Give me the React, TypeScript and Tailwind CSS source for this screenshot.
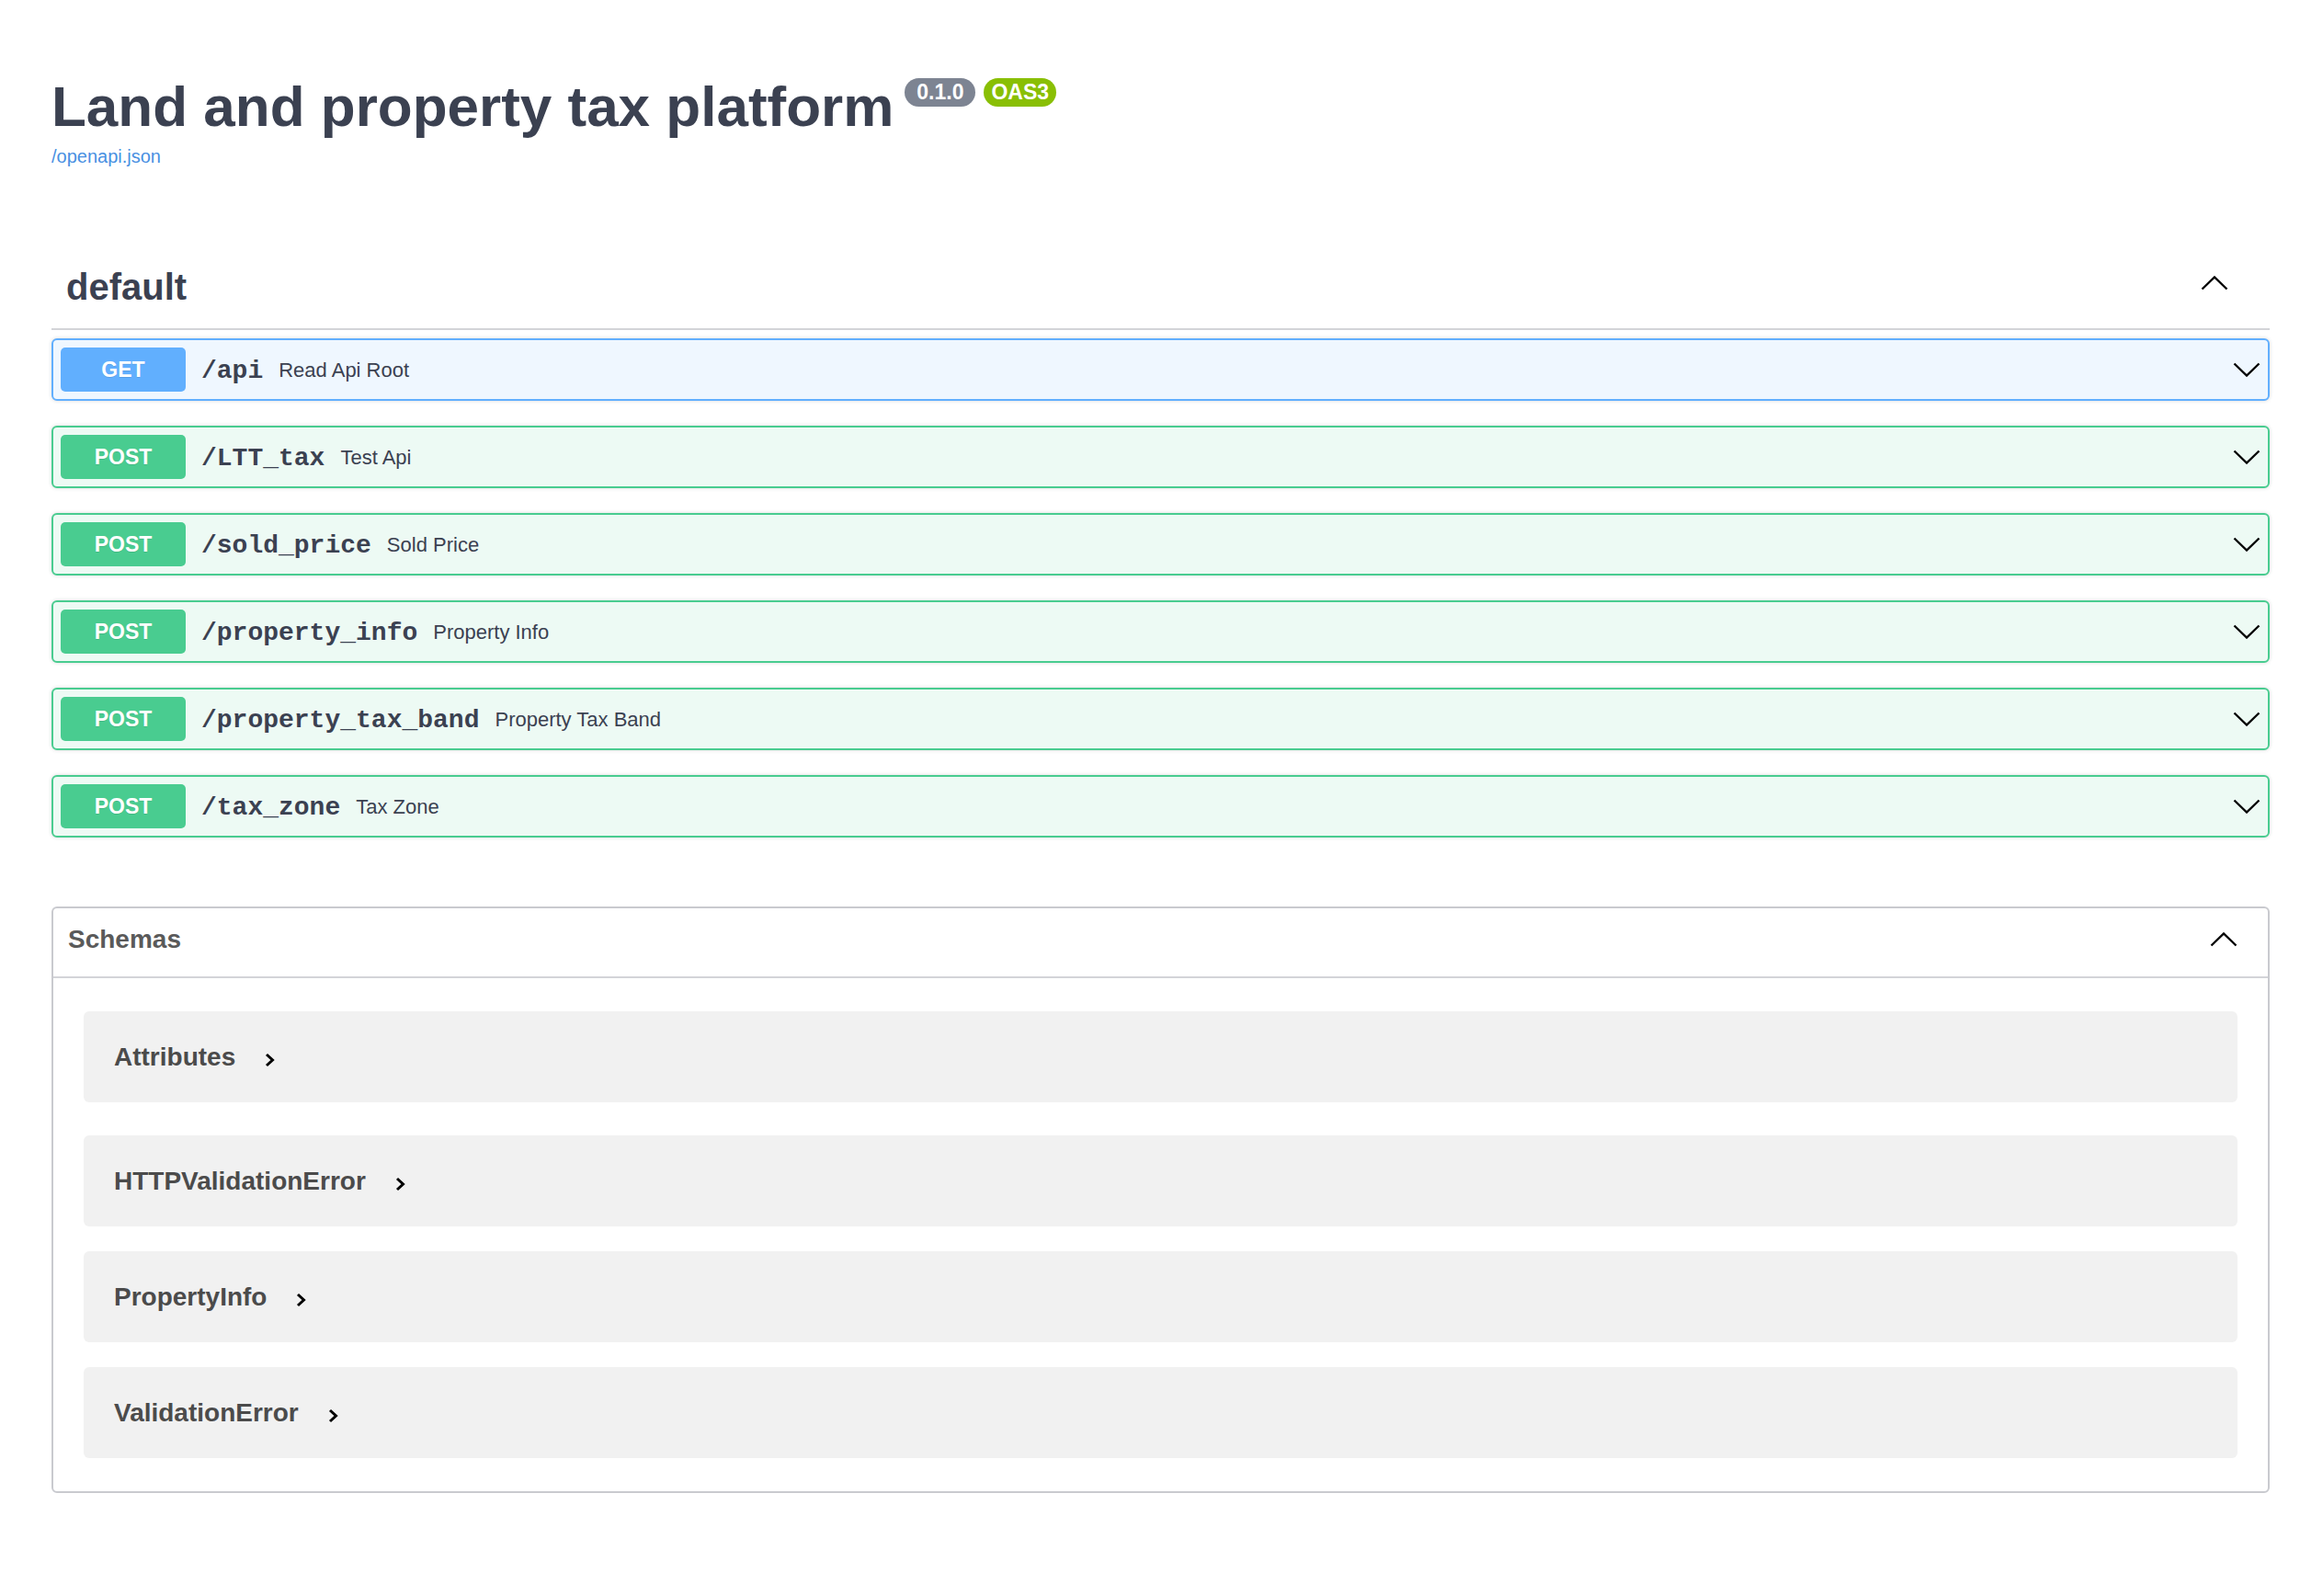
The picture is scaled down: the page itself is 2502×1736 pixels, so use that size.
import React from "react";

type Method = "GET" | "POST";

interface Endpoint {
  method: Method;
  path: string;
  summary: string;
}

const endpoints: Endpoint[] = [
  { method: "GET", path: "/api", summary: "Read Api Root" },
  { method: "POST", path: "/LTT_tax", summary: "Test Api" },
  { method: "POST", path: "/sold_price", summary: "Sold Price" },
  { method: "POST", path: "/property_info", summary: "Property Info" },
  { method: "POST", path: "/property_tax_band", summary: "Property Tax Band" },
  { method: "POST", path: "/tax_zone", summary: "Tax Zone" },
];

const schemas = ["Attributes", "HTTPValidationError", "PropertyInfo", "ValidationError"];

const ChevronDown = () => (
  <svg width="30" height="16" viewBox="0 0 30 16" fill="none" stroke="#000" strokeWidth="2.4">
    <polyline points="1.5,1.5 15,14.5 28.5,1.5" />
  </svg>
);

const ChevronUp = () => (
  <svg width="30" height="16" viewBox="0 0 30 16" fill="none" stroke="#000" strokeWidth="2.4">
    <polyline points="1.5,14.5 15,1.5 28.5,14.5" />
  </svg>
);

const ChevronRight = () => (
  <svg width="11" height="16" viewBox="0 0 11 16" fill="none" stroke="#000" strokeWidth="3">
    <polyline points="2,2 8.5,8 2,14" />
  </svg>
);

const OpBlock = ({ endpoint }: { endpoint: Endpoint }) => {
  const isGet = endpoint.method === "GET";

  return (
    <div
      className={
        isGet
          ? "flex h-[68px] items-center rounded-[6px] border-2 border-[#61affe] bg-[#eff7ff] px-[8px] shadow-[0_0_4px_rgba(0,0,0,0.15)]"
          : "flex h-[68px] items-center rounded-[6px] border-2 border-[#49cc90] bg-[#edfaf4] px-[8px] shadow-[0_0_4px_rgba(0,0,0,0.15)]"
      }
    >
      <span
        className={
          isGet
            ? "flex h-[48px] w-[136px] items-center justify-center rounded-[5px] bg-[#61affe] text-[23px] font-bold text-white [text-shadow:0_1px_0_rgba(0,0,0,0.1)]"
            : "flex h-[48px] w-[136px] items-center justify-center rounded-[5px] bg-[#49cc90] text-[23px] font-bold text-white [text-shadow:0_1px_0_rgba(0,0,0,0.1)]"
        }
      >
        {endpoint.method}
      </span>
      <span className="mt-[4px] ml-[17px] font-['Liberation_Mono',monospace] text-[28px] font-bold text-[#3b4151]">
        {endpoint.path}
      </span>
      <span className="ml-[17px] text-[22px] text-[#3b4151]">{endpoint.summary}</span>
      <span className="ml-auto flex items-center">
        <ChevronDown />
      </span>
    </div>
  );
};

export default function App() {
  return (
    <div className="min-h-screen bg-white pr-[33px] pl-[56px] font-['Liberation_Sans',Arial,sans-serif]">
      {/* Info */}
      <div className="flex items-start pt-[85px]">
        <h2 className="text-[62px] leading-none font-bold text-[#3b4151]">
          Land and property tax platform
        </h2>
        <span className="ml-[12px] flex h-[31px] items-center rounded-full bg-[#7d8492] px-[13px] text-[23px] font-bold text-white">
          0.1.0
        </span>
        <span className="ml-[9px] flex h-[31px] items-center rounded-full bg-[#89bf04] px-[8px] text-[23px] font-bold text-white">
          OAS3
        </span>
      </div>
      <a className="mt-[13px] block text-[20px] leading-[20px] text-[#4990e2]" href="#">
        /openapi.json
      </a>

      {/* default tag */}
      <div className="mt-[96px] flex items-start justify-between border-b-2 border-[#d3d4d8] pt-[16px] pr-[45px] pb-[25px] pl-[16px]">
        <h3 className="text-[40px] leading-none font-bold text-[#3b4151]">default</h3>
        <span className="mt-[8px]">
          <ChevronUp />
        </span>
      </div>

      <div className="mt-[9px] flex flex-col gap-[27px]">
        {endpoints.map((e) => (
          <OpBlock key={e.path} endpoint={e} />
        ))}
      </div>

      {/* Schemas */}
      <section className="mt-[75px] rounded-[6px] border-2 border-[#c9cacf]">
        <div className="flex h-[76px] items-center justify-between border-b-2 border-[#d3d4d8] pr-[33px] pb-[6px] pl-[16px]">
          <h4 className="text-[28px] leading-none font-bold text-[#5a5a5a]">Schemas</h4>
          <ChevronUp />
        </div>
        <div className="flex flex-col px-[33px] pt-[36px] pb-[36px]">
          {schemas.map((name, i) => (
            <div
              key={name}
              className={
                i === 0
                  ? "mb-[36px] flex h-[99px] items-center rounded-[6px] bg-[#f1f1f1] pl-[33px]"
                  : i === schemas.length - 1
                    ? "flex h-[99px] items-center rounded-[6px] bg-[#f1f1f1] pl-[33px]"
                    : "mb-[27px] flex h-[99px] items-center rounded-[6px] bg-[#f1f1f1] pl-[33px]"
              }
            >
              <span className="text-[28px] font-bold text-[#4b4b4b]">{name}</span>
              <span className="mt-[6px] ml-[32px] flex">
                <ChevronRight />
              </span>
            </div>
          ))}
        </div>
      </section>
    </div>
  );
}
